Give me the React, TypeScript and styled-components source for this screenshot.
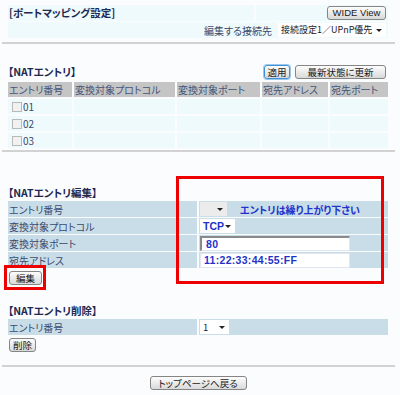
import React from "react";
import styled, { createGlobalStyle } from "styled-components";

const GlobalStyle = createGlobalStyle`
  html, body {
    margin: 0;
    padding: 0;
    background: #fbfcfe;
  }
  body {
    font-family: "Noto Sans CJK JP", "Liberation Sans", sans-serif;
    font-size: 10px;
    font-feature-settings: "palt";
    color: #3b4a6d;
  }
`;

const natColumns = ["エントリ番号", "変換対象プロトコル", "変換対象ポート", "宛先アドレス", "宛先ポート"];
const entries = ["01", "02", "03"];

export default function App() {
  return (
    <Page>
      <GlobalStyle />

      <TopBand>
        <BandRow $cols="1fr 132px">
          <BandCell>
            <Title>[ポートマッピング設定]</Title>
          </BandCell>
          <BandCell $align="flex-end">
            <Button $w={59} $latin>WIDE View</Button>
          </BandCell>
        </BandRow>
        <BandRow>
          <BandCell $align="flex-end">
            <span>編集する接続先</span>
            <SelectBox $w={108} $fs={9}>接続設定1／UPnP優先</SelectBox>
          </BandCell>
        </BandRow>
      </TopBand>

      <Divider />

      <SectionHead $top={20}>
        <Title>【NATエントリ】</Title>
        <HeadButtons>
          <Button $w={26} $focused>適用</Button>
          <Button $w={91}>最新状態に更新</Button>
        </HeadButtons>
      </SectionHead>
      <NatTable>
        {natColumns.map((c) => (
          <HeadCell key={c}>{c}</HeadCell>
        ))}
        {entries.map((e) => (
          <React.Fragment key={e}>
            <BodyCell>
              <CheckBox />
              {e}
            </BodyCell>
            <BodyCell />
            <BodyCell />
            <BodyCell />
            <BodyCell />
          </React.Fragment>
        ))}
      </NatTable>

      <Divider $top={2} />

      <SectionHead $top={33}>
        <Title>【NATエントリ編集】</Title>
      </SectionHead>
      <FormTable>
        <LabelCell>エントリ番号</LabelCell>
        <ValueCell>
          <SelectBox $w={27} $empty />
          <Notice>エントリは繰り上がり下さい</Notice>
        </ValueCell>
        <LabelCell>変換対象プロトコル</LabelCell>
        <ValueCell>
          <SelectBox $w={35} $blue>TCP</SelectBox>
        </ValueCell>
        <LabelCell>変換対象ポート</LabelCell>
        <ValueCell>
          <TextInput readOnly value="80" $inset />
        </ValueCell>
        <LabelCell>宛先アドレス</LabelCell>
        <ValueCell>
          <TextInput readOnly value="11:22:33:44:55:FF" />
        </ValueCell>
      </FormTable>
      <ButtonRow>
        <Button $w={33}>編集</Button>
      </ButtonRow>

      <SectionHead $top={18}>
        <Title>【NATエントリ削除】</Title>
      </SectionHead>
      <FormTable>
        <LabelCell>エントリ番号</LabelCell>
        <ValueCell>
          <SelectBox $w={29}>1</SelectBox>
        </ValueCell>
      </FormTable>
      <ButtonRow>
        <Button $w={27}>削除</Button>
      </ButtonRow>

      <Divider $top={13} />

      <Footer>
        <Button $w={97}>トップページへ戻る</Button>
      </Footer>

      <Highlight $x={176} $y={176} $w={208} $h={108} />
      <Highlight $x={4} $y={265} $w={42} $h={25} />
    </Page>
  );
}

const Page = styled.div`
  position: relative;
  width: 400px;
  height: 395px;
  box-sizing: border-box;
  padding: 0 12px 0 8px;
  overflow: hidden;
`;

const TopBand = styled.div`
  margin-top: 5px;
  display: grid;
  gap: 1px;
`;

const BandRow = styled.div<{ $cols?: string }>`
  display: grid;
  grid-template-columns: ${(p) => p.$cols ?? "1fr"};
  gap: 2px;
  height: 16px;
`;

const BandCell = styled.div<{ $align?: string }>`
  display: flex;
  align-items: center;
  justify-content: ${(p) => p.$align ?? "flex-start"};
  gap: 6px;
  padding: 0 2px 0 1px;
  background: #eefafc;
`;

const Title = styled.span`
  font-weight: 700;
  font-size: 10.5px;
  color: #1e2a52;
  line-height: 14px;
`;

const Divider = styled.div<{ $top?: number }>`
  height: 2px;
  margin: ${(p) => p.$top ?? 4}px -7px 0 -6px;
  background: #d2d2d2;
`;

const SectionHead = styled.div<{ $top: number }>`
  margin-top: ${(p) => p.$top}px;
  height: 16px;
  display: flex;
  align-items: center;
  justify-content: space-between;
`;

const HeadButtons = styled.div`
  display: flex;
  gap: 5px;
  padding-right: 2px;
`;

const Button = styled.button<{ $w: number; $focused?: boolean; $latin?: boolean }>`
  width: ${(p) => p.$w}px;
  height: 14px;
  padding: 0;
  box-sizing: border-box;
  display: inline-flex;
  align-items: center;
  justify-content: center;
  font-family: ${(p) => (p.$latin ? '"Liberation Sans", sans-serif' : '"Noto Sans CJK JP", sans-serif')};
  font-feature-settings: "palt";
  font-size: 9.5px;
  line-height: 12px;
  color: #1a1a1a;
  border: 1px solid ${(p) => (p.$focused ? "#3d8fd6" : "#858585")};
  box-shadow: ${(p) => (p.$focused ? "0 0 0 1px #9cc8ee" : "none")};
  border-radius: 3px;
  background: linear-gradient(#fdfdfd, #d9d9d9);
`;

const SelectBox = styled.span<{ $w: number; $fs?: number; $empty?: boolean; $blue?: boolean }>`
  position: relative;
  display: inline-flex;
  align-items: center;
  flex: none;
  box-sizing: border-box;
  width: ${(p) => p.$w}px;
  height: 14px;
  padding: 0 11px 0 3px;
  overflow: hidden;
  white-space: nowrap;
  background: ${(p) => (p.$empty ? "#ececec" : "#ffffff")};
  color: ${(p) => (p.$blue ? "#1f33c8" : "#222")};
  font-weight: ${(p) => (p.$blue ? 700 : 400)};
  font-size: ${(p) => (p.$blue ? 10.5 : p.$fs ?? 9.5)}px;
  font-family: ${(p) => (p.$blue ? '"Liberation Sans", sans-serif' : "inherit")};
  line-height: 12px;

  &::after {
    content: "";
    position: absolute;
    right: 4px;
    top: 6px;
    border-left: 3px solid transparent;
    border-right: 3px solid transparent;
    border-top: 3px solid #222;
  }
`;

const NatTable = styled.div`
  margin-top: 2px;
  display: grid;
  grid-template-columns: 64px 101px 83px 66px 1fr;
  grid-auto-rows: 15px;
  gap: 2px 2px;
`;

const HeadCell = styled.div`
  display: flex;
  align-items: center;
  padding-left: 1px;
  background: #c5c5c5;
  color: #44557a;
  font-size: 10px;
  white-space: nowrap;
`;

const BodyCell = styled.div`
  display: flex;
  align-items: center;
  gap: 1px;
  padding-left: 4px;
  background: #eefafc;
  color: #3b4a6d;
`;

const CheckBox = styled.span`
  width: 8px;
  height: 8px;
  border: 1px solid #b8b8b8;
  background: #f1f1f1;
`;

const FormTable = styled.div`
  display: grid;
  grid-template-columns: 189px 1fr;
  grid-auto-rows: 16px;
  gap: 1px 2px;
`;

const LabelCell = styled.div`
  display: flex;
  align-items: center;
  padding-left: 1px;
  background: #c9dde9;
  color: #3b4a6d;
`;

const ValueCell = styled.div`
  display: flex;
  align-items: center;
  gap: 13px;
  padding-left: 1px;
  background: #c9dde9;
`;

const Notice = styled.span`
  color: #2233cc;
  font-weight: 700;
  font-size: 10px;
`;

const TextInput = styled.input<{ $inset?: boolean }>`
  width: 150px;
  height: 15px;
  box-sizing: border-box;
  padding: 0 3px;
  font-family: "Liberation Sans", sans-serif;
  font-size: 10.5px;
  font-weight: 700;
  letter-spacing: 0.3px;
  color: #1f33c8;
  background: #ffffff;
  outline: none;
  border: 1px solid #e1e6ee;
  ${(p) => (p.$inset ? "border-top: 2px solid #8a8a8a; border-left: 2px solid #8a8a8a; padding-left: 4px;" : "")}
`;

const ButtonRow = styled.div`
  margin-top: 3px;
  padding-left: 1px;
  display: flex;
`;

const Footer = styled.div`
  margin-top: 9px;
  display: flex;
  justify-content: center;
`;

const Highlight = styled.div<{ $x: number; $y: number; $w: number; $h: number }>`
  position: absolute;
  left: ${(p) => p.$x}px;
  top: ${(p) => p.$y}px;
  width: ${(p) => p.$w}px;
  height: ${(p) => p.$h}px;
  box-sizing: border-box;
  border: 3px solid #ee0000;
  pointer-events: none;
`;
